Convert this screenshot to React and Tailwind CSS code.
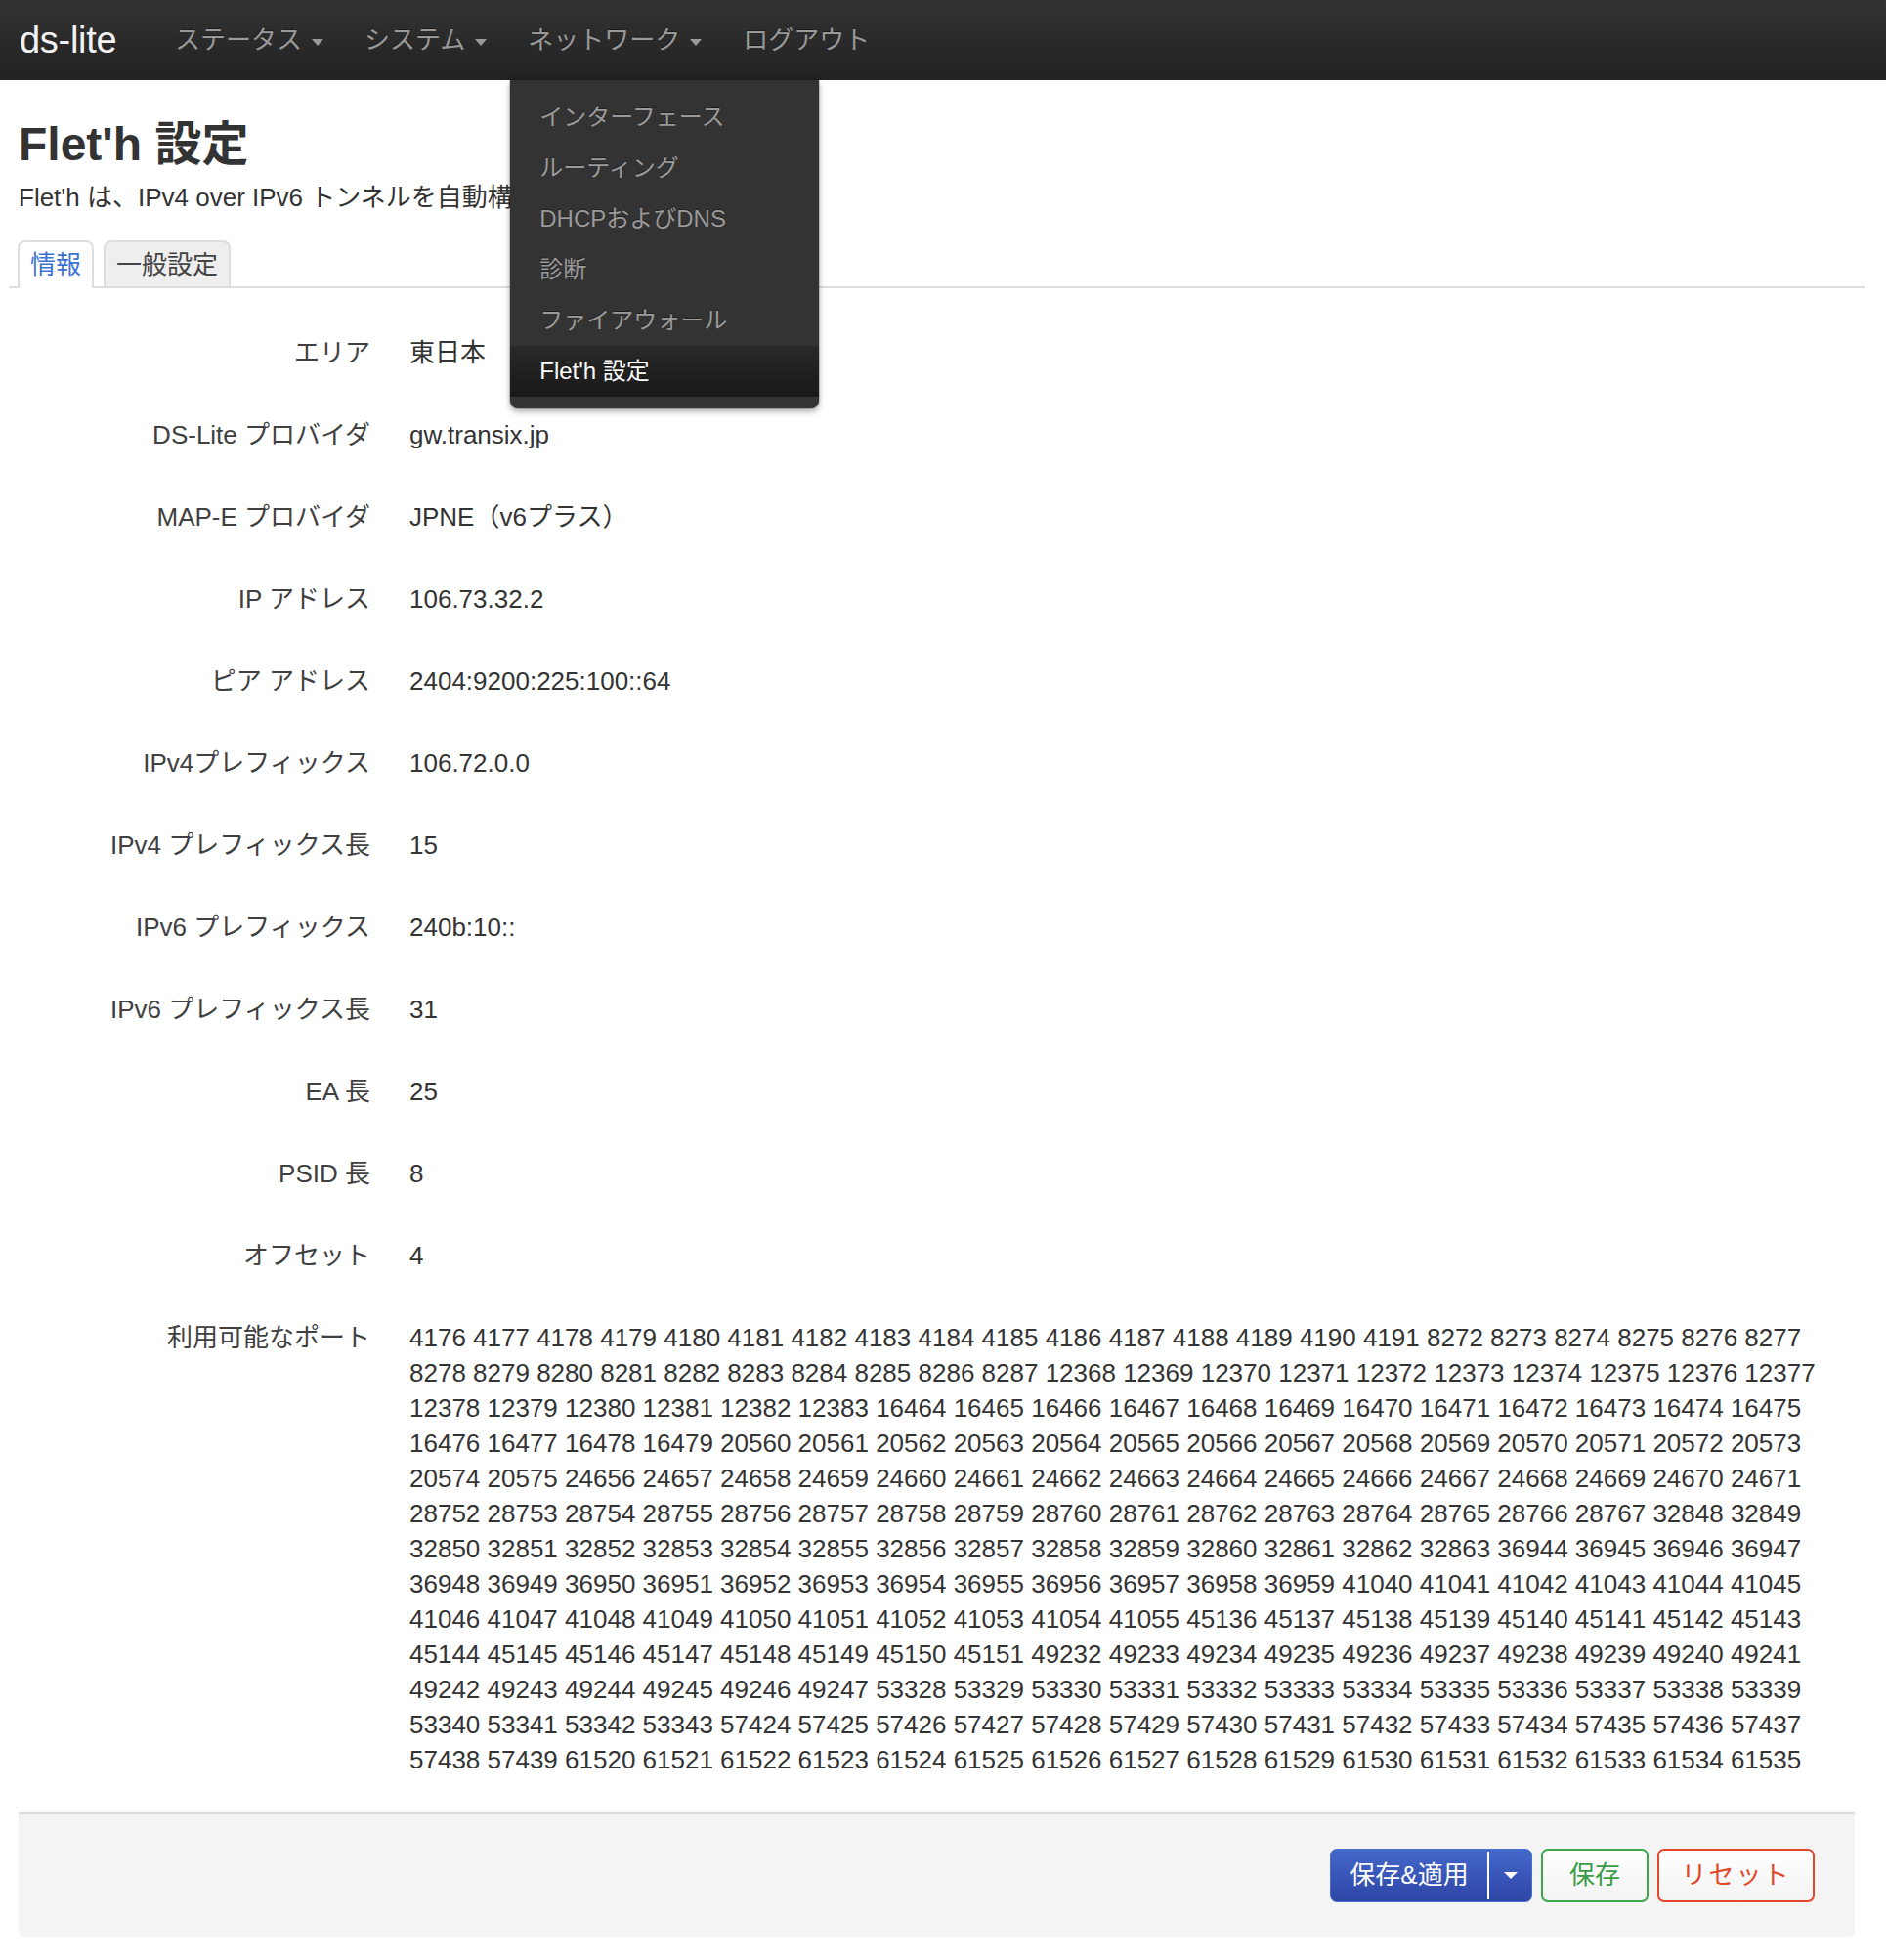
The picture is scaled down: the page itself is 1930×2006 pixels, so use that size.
import React from "react";

const rows = [
  ["エリア", "東日本"],
  ["DS-Lite プロバイダ", "gw.transix.jp"],
  ["MAP-E プロバイダ", "JPNE（v6プラス）"],
  ["IP アドレス", "106.73.32.2"],
  ["ピア アドレス", "2404:9200:225:100::64"],
  ["IPv4プレフィックス", "106.72.0.0"],
  ["IPv4 プレフィックス長", "15"],
  ["IPv6 プレフィックス", "240b:10::"],
  ["IPv6 プレフィックス長", "31"],
  ["EA 長", "25"],
  ["PSID 長", "8"],
  ["オフセット", "4"],
];

const ports = [];
for (let i = 1; i <= 15; i++) {
  const base = 4096 * i + 80;
  for (let j = 0; j < 16; j++) ports.push(base + j);
}

function Caret() {
  return (
    <span className="ml-[10px] inline-block h-0 w-0 translate-y-[2px] border-l-[6px] border-r-[6px] border-t-[7px] border-l-transparent border-r-transparent border-t-[#9a9a9a]" />
  );
}

const menu = ["インターフェース", "ルーティング", "DHCPおよびDNS", "診断", "ファイアウォール"];

export default function App() {
  return (
    <div className="min-h-[2006px] bg-white font-['Liberation_Sans','Noto_Sans_CJK_JP',sans-serif] text-[#333]">
      <header className="relative z-10 flex h-[82px] items-center bg-linear-to-b from-[#333333] to-[#222222] pl-[20px]">
        <div className="w-[159px] text-[38px] leading-none tracking-[-0.3px] text-[#f2f2f2]">ds-lite</div>
        <ul className="flex h-full items-center gap-[42px] text-[26px] text-[#999] [text-shadow:0_-1px_0_rgba(0,0,0,0.4)]">
          <li className="flex h-full items-center">
            ステータス
            <Caret />
          </li>
          <li className="flex h-full items-center">
            システム
            <Caret />
          </li>
          <li className="relative flex h-full items-center">
            ネットワーク
            <Caret />
            <div className="absolute left-[-18px] top-full w-[316px] rounded-b-[8px] bg-[#333] py-[12px] shadow-[0_3px_6px_rgba(0,0,0,0.35),0_0_0_1px_rgba(0,0,0,0.15)]">
              {menu.map((m) => (
                <div key={m} className="flex h-[52px] items-center pl-[30px] text-[24px] text-[#9a9a9a]">
                  {m}
                </div>
              ))}
              <div className="flex h-[52px] items-center bg-linear-to-b from-[#2a2a2a] to-[#181818] pl-[30px] text-[24px] text-white">
                Flet'h 設定
              </div>
            </div>
          </li>
          <li className="flex h-full items-center">ログアウト</li>
        </ul>
      </header>

      <main className="pl-[19px] pr-[32px]">
        <h1 className="mt-[39px] text-[48px] font-bold leading-[53px] text-[#333]">Flet'h 設定</h1>
        <p className="mt-[10px] text-[26px] leading-[36px] text-[#333]">
          Flet'h は、IPv4 over IPv6 トンネルを自動構成します。
        </p>

        <div className="-mx-[10px] mt-[26px] flex gap-[10px] border-b-2 border-[#dddddd] pl-[9px] text-[26px] leading-[36px]">
          <div className="-mb-[2px] rounded-t-[8px] border-2 border-b-0 border-[#dddddd] bg-white px-[11px] pb-[6px] pt-[5px] text-[#3c74d6]">
            情報
          </div>
          <div className="rounded-t-[8px] border-2 border-b-0 border-[#dddddd] bg-[#eeeeee] px-[11px] pb-[4px] pt-[5px] text-[#444]">
            一般設定
          </div>
        </div>

        <div className="mt-[24px] grid grid-cols-[360px_1fr] gap-x-[40px] pr-[18px] text-[26px] leading-[36px]">
          {rows.map(([k, v]) => (
            <React.Fragment key={k}>
              <div className="py-[24px] text-right text-[#404040]">{k}</div>
              <div className="py-[24px] text-[#333]">{v}</div>
            </React.Fragment>
          ))}
          <div className="py-[24px] text-right text-[#404040]">利用可能なポート</div>
          <div className="py-[24px] text-[#333]">{ports.join(" ")}</div>
        </div>

        <div className="mt-[12px] flex h-[127px] items-center justify-end gap-[9px] rounded-b-[6px] border-t-2 border-[#dddddd] bg-[#f4f4f4] pr-[41px] text-[26px]">
          <div className="flex h-[55px] overflow-hidden rounded-[7px] border border-[#4a6fd0] bg-linear-to-b from-[#4468cb] to-[#2e45a5] text-white">
            <div className="flex w-[160px] items-center justify-center">保存&amp;適用</div>
            <div className="my-[2px] w-[2px] bg-white" />
            <div className="flex w-[43px] items-center justify-center">
              <span className="inline-block h-0 w-0 border-l-[7px] border-r-[7px] border-t-[7px] border-l-transparent border-r-transparent border-t-white" />
            </div>
          </div>
          <div className="flex h-[55px] w-[110px] items-center justify-center rounded-[7px] border-2 border-[#3ea64d] bg-linear-to-b from-white to-[#f3f3f3] text-[#3a9b46]">
            保存
          </div>
          <div className="flex h-[55px] w-[161px] items-center justify-center rounded-[7px] border-2 border-[#e5472a] bg-linear-to-b from-white to-[#f3f3f3] tracking-[2px] text-[#df472a]">
            リセット
          </div>
        </div>
      </main>
    </div>
  );
}
